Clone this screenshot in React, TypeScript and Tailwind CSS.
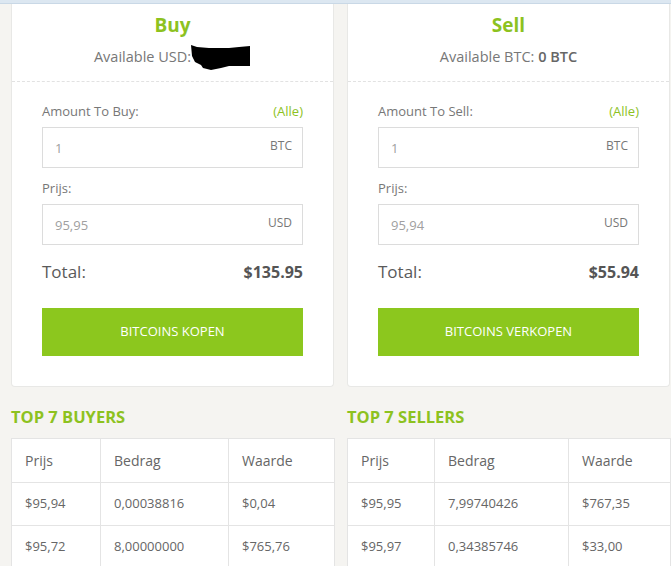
import React from "react";

const GREEN = "text-[#8dc21f]";

type Row = { prijs: string; bedrag: string; waarde: string };

const BUYERS: Row[] = [
  { prijs: "$95,94", bedrag: "0,00038816", waarde: "$0,04" },
  { prijs: "$95,72", bedrag: "8,00000000", waarde: "$765,76" },
];

const SELLERS: Row[] = [
  { prijs: "$95,95", bedrag: "7,99740426", waarde: "$767,35" },
  { prijs: "$95,97", bedrag: "0,34385746", waarde: "$33,00" },
];

function Redacted() {
  return (
    <svg width="62" height="26" viewBox="0 0 62 26" className="inline-block align-middle -ml-[2px]">
      <path
        d="M2 1 L8 3 L20 4 L40 4 L50 3 L61 2 L61 22 L40 22 L32 24 L22 26 L14 24 L12 21 L6 18 L3 12 Z"
        fill="#000"
      />
    </svg>
  );
}

function Field({ value, unit }: { value: string; unit: string }) {
  return (
    <div className="h-[41px] border border-[#dcdcdc] bg-white flex items-center justify-between pl-[12px] pr-[10px]">
      <span className="text-[13px] text-[#a0a0a0] pt-[2px]">{value}</span>
      <span className="text-[12px] text-[#777] -mt-[4px]">{unit}</span>
    </div>
  );
}

function TradeCard({
  title,
  available,
  amountLabel,
  amount,
  price,
  total,
  button,
}: {
  title: string;
  available: React.ReactNode;
  amountLabel: string;
  amount: string;
  price: string;
  total: string;
  button: string;
}) {
  return (
    <div className="bg-white border border-[#e8e8e6] border-t-0 rounded-b-[4px]">
      <div className="pt-[7px] pb-[12px] text-center">
        <div className={`text-[19px] font-bold leading-[28px] ${GREEN}`}>{title}</div>
        <div className="text-[14.5px] text-[#777] leading-[22px] mt-[6px] h-[24px] flex items-center justify-center">
          {available}
        </div>
      </div>
      <div className="border-t border-dashed border-[#e2e2e2] pl-[30px] pr-[30px] pt-[20px] pb-[30px]">
        <div className="flex justify-between text-[13px] leading-[18px] text-[#777]">
          <span>{amountLabel}</span>
          <span className={GREEN}>(Alle)</span>
        </div>
        <div className="mt-[7px]">
          <Field value={amount} unit="BTC" />
        </div>
        <div className="text-[13px] leading-[18px] text-[#777] mt-[11px]">Prijs:</div>
        <div className="mt-[7px]">
          <Field value={price} unit="USD" />
        </div>
        <div className="flex justify-between items-center mt-[14px] h-[26px]">
          <span className="text-[17px] text-[#5a5a5a]">Total:</span>
          <span className="text-[16px] font-bold text-[#555]">{total}</span>
        </div>
        <button className="mt-[23px] w-full h-[48px] bg-[#8cc71e] text-white text-[13px] uppercase">
          {button}
        </button>
      </div>
    </div>
  );
}

function TopTable({ title, rows, cols }: { title: string; rows: Row[]; cols: string }) {
  return (
    <div>
      <div className={`text-[16.5px] font-bold leading-[24px] mt-[5px] ${GREEN}`}>{title}</div>
      <table className="mt-[9px] w-full bg-white border border-[#e4e4e4] border-collapse table-fixed text-left">
        <colgroup>
          {cols.split(" ").map((w, i) => (
            <col key={i} style={{ width: w }} />
          ))}
        </colgroup>
        <thead>
          <tr className="h-[44px]">
            {["Prijs", "Bedrag", "Waarde"].map((h) => (
              <th key={h} className="border border-[#e4e4e4] px-[13px] text-[14px] font-medium text-[#666]">
                {h}
              </th>
            ))}
          </tr>
        </thead>
        <tbody>
          {rows.map((r) => (
            <tr key={r.prijs} className="h-[43px]">
              <td className="border border-[#e4e4e4] px-[13px] text-[13px] text-[#666]">{r.prijs}</td>
              <td className="border border-[#e4e4e4] px-[13px] text-[13px] text-[#666]">{r.bedrag}</td>
              <td className="border border-[#e4e4e4] px-[13px] text-[13px] text-[#666]">{r.waarde}</td>
            </tr>
          ))}
        </tbody>
      </table>
    </div>
  );
}

export default function App() {
  return (
    <div
      className="w-[671px] h-[566px] overflow-hidden bg-[#f5f4f1]"
      style={{ fontFamily: '"Open Sans", "Liberation Sans", sans-serif' }}
    >
      <div className="h-[4px] bg-[#dce7f1] border-b border-[#c9d8e6]" />
      <div className="grid grid-cols-2 gap-[13px] pl-[11px] pr-[1px]">
        <TradeCard
          title="Buy"
          available={
            <>
              <span>Available USD:</span>
              <Redacted />
            </>
          }
          amountLabel="Amount To Buy:"
          amount="1"
          price="95,95"
          total="$135.95"
          button="Bitcoins kopen"
        />
        <TradeCard
          title="Sell"
          available={
            <span>
              Available BTC: <span className="font-semibold text-[#666]">0 BTC</span>
            </span>
          }
          amountLabel="Amount To Sell:"
          amount="1"
          price="95,94"
          total="$55.94"
          button="Bitcoins verkopen"
        />
        <TopTable title="TOP 7 BUYERS" rows={BUYERS} cols="89px 128px 106px" />
        <TopTable title="TOP 7 SELLERS" rows={SELLERS} cols="87px 134px 102px" />
      </div>
    </div>
  );
}
